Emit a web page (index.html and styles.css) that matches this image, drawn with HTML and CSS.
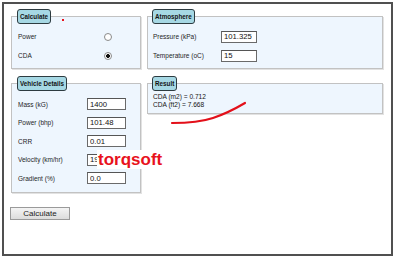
FILE: index.html
```html
<!DOCTYPE html>
<html lang="en">
<head>
<meta charset="utf-8">
<title>CDA Calculator</title>
<link rel="stylesheet" href="styles.css">
</head>
<body>
<div class="frame">
  <div class="grid">
    <fieldset class="panel panel-calc">
      <legend class="legend">Calculate</legend>
      <div class="row row-19"><span class="lbl lbl-wide">Power</span><input class="radio" type="radio" name="calc"></div>
      <div class="row row-19"><span class="lbl lbl-wide">CDA</span><input class="radio" type="radio" name="calc" checked></div>
    </fieldset>
    <fieldset class="panel panel-atmos">
      <legend class="legend">Atmosphere</legend>
      <div class="row row-19"><span class="lbl lbl-atmos">Pressure (kPa)</span><input class="field field-atmos" type="text" value="101.325"></div>
      <div class="row row-19"><span class="lbl lbl-atmos">Temperature (oC)</span><input class="field field-atmos" type="text" value="15"></div>
    </fieldset>
    <fieldset class="panel panel-vehicle">
      <legend class="legend">Vehicle Details</legend>
      <div class="row row-18"><span class="lbl">Mass (kG)</span><input class="field" type="text" value="1400"></div>
      <div class="row row-18"><span class="lbl">Power (bhp)</span><input class="field" type="text" value="101.48"></div>
      <div class="row row-18"><span class="lbl">CRR</span><input class="field" type="text" value="0.01"></div>
      <div class="row row-18"><span class="lbl">Velocity (km/hr)</span><input class="field" type="text" value="19"></div>
      <div class="row row-18"><span class="lbl">Gradient (%)</span><input class="field" type="text" value="0.0"></div>
    </fieldset>
    <fieldset class="panel panel-result">
      <legend class="legend">Result</legend>
      <div class="result-line">CDA (m2) = 0.712</div>
      <div class="result-line">CDA (ft2) = 7.668</div>
    </fieldset>
  </div>
  <button class="btn" type="button">Calculate</button>
  <span class="watermark">torqsoft</span>
  <span class="dot"></span>
  <svg class="scribble" width="82" height="30" viewBox="0 0 82 30">
    <path d="M4 25 Q 30 25 45 20 T 77 5" fill="none" stroke="#e3101a" stroke-width="2.2" stroke-linecap="round"/>
  </svg>
</div>
</body>
</html>
```
FILE: styles.css
```css
html, body {
  margin: 0;
  padding: 0;
  background: #ffffff;
}

body {
  font-family: "Liberation Sans", Arial, sans-serif;
  color: #1a1a1a;
}

.frame {
  position: relative;
  box-sizing: border-box;
  margin: 2px;
  width: 391px;
  height: 254px;
  border: 2px solid #505050;
  padding: 5px 7px;
  background: #ffffff;
}

.grid {
  display: grid;
  grid-template-columns: 130px 236px;
  column-gap: 6px;
  row-gap: 7px;
  align-items: start;
}

.panel {
  margin: 0;
  min-width: 0;
  border: 1px solid #c2c2c2;
  background: #eef6fe;
  box-shadow: 1px 1px 0 #e2e2e2;
}

.panel-calc {
  padding: 3px 6px 3px 6px;
}

.panel-atmos {
  padding: 3px 5px 3px 5px;
}

.panel-vehicle {
  padding: 4px 6px 4px 6px;
}

.panel-result {
  padding: 1.5px 5px 3px 5px;
}

.legend {
  margin-left: -1px;
  padding: 2px 2px;
  border: 1px solid #2d3b40;
  border-radius: 3px;
  background: #a6d8e4;
  font-size: 6.3px;
  font-weight: bold;
  line-height: 9px;
  color: #141414;
}

.row {
  display: flex;
  align-items: center;
}

.row-19 {
  height: 19px;
}

.row-18 {
  height: 18.5px;
}

.lbl {
  display: inline-block;
  width: 69px;
  font-size: 6.5px;
  color: #1e1e1e;
}

.lbl-wide {
  width: 86px;
}

.lbl-atmos {
  width: 68px;
}

.field {
  box-sizing: border-box;
  width: 39px;
  height: 12px;
  margin: 0;
  padding: 0 2px;
  border: 1px solid #6a6a6a;
  border-top-color: #555;
  background: #ffffff;
  font-family: "Liberation Sans", Arial, sans-serif;
  font-size: 7.7px;
  color: #111;
  outline: none;
}

.field-atmos {
  width: 36px;
}

.radio {
  appearance: none;
  -webkit-appearance: none;
  box-sizing: border-box;
  width: 8px;
  height: 8px;
  margin: 0;
  border: 1px solid #8a8a8a;
  border-radius: 50%;
  background: #ffffff;
}

.radio:checked {
  background: radial-gradient(circle, #111 0 1.6px, #ffffff 2.2px);
}

.result-line {
  font-size: 6.6px;
  line-height: 8.5px;
  color: #141414;
}

.btn {
  display: block;
  box-sizing: border-box;
  margin: 14px 0 0 -1px;
  width: 60px;
  height: 13px;
  padding: 0;
  border: 1px solid #9a9a9a;
  background: linear-gradient(#f4f4f4, #dcdcdc);
  font-family: "Liberation Sans", Arial, sans-serif;
  font-size: 8px;
  line-height: 11px;
  color: #222;
}

.watermark {
  position: absolute;
  left: 93px;
  top: 146px;
  padding: 0 1px;
  background: #ffffff;
  font-family: "Liberation Sans", Arial, sans-serif;
  font-weight: bold;
  font-size: 17px;
  line-height: 19px;
  color: #e8121c;
}

.dot {
  position: absolute;
  left: 58px;
  top: 15px;
  width: 2px;
  height: 2px;
  background: #e8121c;
}

.scribble {
  position: absolute;
  left: 164px;
  top: 94px;
}
```
